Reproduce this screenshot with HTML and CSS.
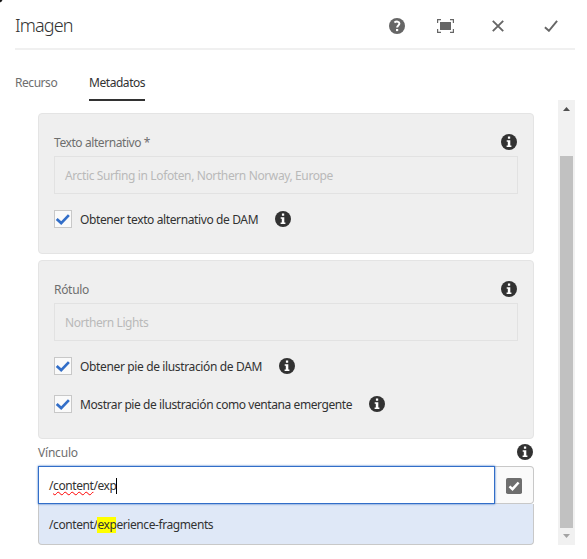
FILE: index.html
```html
<!DOCTYPE html>
<html lang="es">
<head>
<meta charset="utf-8">
<title>Imagen</title>
<link rel="stylesheet" href="styles.css">
</head>
<body>
<svg class="defs" aria-hidden="true">
  <symbol id="info" viewBox="0 0 16 16">
    <circle cx="8" cy="8" r="8" fill="#323232"/>
    <path d="M6.9 2.5h2.3v2.3H6.9zM5.7 6.2h3.6v5.2h1.1V13H5.6v-1.6h1.2V7.8H5.7z" fill="#fff"/>
  </symbol>
  <symbol id="tick" viewBox="0 0 16 16">
    <path d="M1.7 7.9 6.2 12.1 13.9 4.1" fill="none" stroke="#326ec8" stroke-width="2.7"/>
  </symbol>
</svg>
<div class="dialog">
  <header class="header">
    <h1 class="title">Imagen</h1>
    <div class="actions">
      <svg class="help" viewBox="0 0 16 16"><circle cx="8" cy="8" r="8" fill="#666"/><path d="M5.4 4.500C7.500 3 10.400 3.500 10.400 5.600 10.400 7.500 8.100 7.500 8.100 9.600" fill="none" stroke="#fff" stroke-width="2"/><path d="M7 11h2.200v2.100H7z" fill="#fff"/></svg>
      <svg class="full" viewBox="0 0 17 14"><path d="M3 3h11v8H3z" fill="#666"/><path d="M.6 4V.6H4M13 .6h3.400V4M16.400 10v3.400H13M4 13.400H.6V10" fill="none" stroke="#666" stroke-width="1.200"/></svg>
      <svg class="close" viewBox="0 0 12 12"><path d="M.8.8 11.200 11.200M11.200.8.8 11.200" stroke="#666" stroke-width="1.900"/></svg>
      <svg class="done" viewBox="0 0 14 12"><path d="M.9 7.200 4.900 10.800 13.100.8" fill="none" stroke="#666" stroke-width="1.900"/></svg>
    </div>
  </header>
  <nav class="tabs">
    <a class="tab"><span class="t-recurso">Recurso</span></a>
    <a class="tab active"><span class="t-meta">Metadatos</span></a>
  </nav>
  <div class="body">
    <main class="content">
      <section class="panel panel-alt">
        <div class="label-row"><span class="t-alt">Texto alternativo *</span><svg class="info"><use href="#info"/></svg></div>
        <div class="field"><span class="t-arctic">Arctic Surfing in Lofoten, Northern Norway, Europe</span></div>
        <div class="check"><span class="box"><svg><use href="#tick"/></svg></span><span class="caption t-obt">Obtener texto alternativo de DAM</span><svg class="info"><use href="#info"/></svg></div>
      </section>
      <section class="panel panel-caption">
        <div class="label-row"><span class="t-rot">Rótulo</span><svg class="info"><use href="#info"/></svg></div>
        <div class="field"><span class="t-north">Northern Lights</span></div>
        <div class="check"><span class="box"><svg><use href="#tick"/></svg></span><span class="caption t-pie">Obtener pie de ilustración de DAM</span><svg class="info"><use href="#info"/></svg></div>
        <div class="check"><span class="box"><svg><use href="#tick"/></svg></span><span class="caption t-most">Mostrar pie de ilustración como ventana emergente</span><svg class="info"><use href="#info"/></svg></div>
      </section>
      <div class="label-row link-label"><span class="t-vin">Vínculo</span><svg class="info"><use href="#info"/></svg></div>
      <div class="picker">
        <div class="entry"><span class="t-path">/<span class="misspelt">content</span>/exp</span><i class="caret"></i></div>
        <div class="browse"><svg viewBox="0 0 16 16"><rect width="16" height="16" rx="1.800" fill="#6e6e6e"/><path d="M3.500 8.400 6.500 11.200 12.600 4.500" fill="none" stroke="#fff" stroke-width="2.500"/></svg></div>
      </div>
      <div class="option"><span class="t-frag">/content/<mark>exp</mark>erience-fragments</span></div>
    </main>
    <div class="scrollbar">
      <svg class="arrow" viewBox="0 0 7 4"><path d="M0 4 3.500 0 7 4z" fill="#505050"/></svg>
      <div class="thumb"></div>
      <svg class="arrow" viewBox="0 0 7 4"><path d="M0 0 3.500 4 7 0z" fill="#a3a3a3"/></svg>
    </div>
  </div>
</div>
</body>
</html>
```

FILE: styles.css
```css
* { box-sizing: border-box; }
body { margin: 0; background: #fff; color: #323232; font: 12px/18px "Noto Sans", "Open Sans", sans-serif; letter-spacing: -.42px; overflow: hidden; }
svg { display: block; flex: none; }
span { white-space: nowrap; }
.defs { position: absolute; width: 0; height: 0; }
.dialog { width: 587px; height: 559px; padding: 0 12px 0 15px; background: radial-gradient(circle at 0 0, #111 0 1.5px, transparent 2.8px); }
.header { display: flex; justify-content: space-between; height: 50px; border-bottom: 2px solid #f0f0f0; }
.title { margin: 13px 0 0; font-size: 18px; line-height: 25px; font-weight: 300; letter-spacing: -.85px; }
.actions { display: flex; align-items: center; height: 52px; padding-right: 17px; }
.help { width: 16px; height: 16px; margin-right: 32px; }
.full { width: 17px; height: 14px; margin-right: 38px; }
.close { width: 12px; height: 12px; margin-right: 40px; }
.done { width: 14px; height: 12px; }
.tabs { display: flex; gap: 32px; height: 51px; padding-top: 24px; }
.tab { height: 27px; color: #6e6e6e; }
.tab span { display: block; width: 42px; }
.tab.active { color: #323232; border-bottom: 2px solid #323232; }
.tab.active span { width: 56px; }
.body { display: flex; justify-content: space-between; margin-top: -1px; }
.content { width: 496px; margin: 13px 0 0 23px; }
.panel { padding: 15px; border: 1px solid #e4e4e4; border-radius: 4px; background: #efefef; }
.panel-alt { height: 141px; margin-bottom: 6px; }
.panel-caption { height: 179px; }
.label-row { display: flex; align-items: center; justify-content: space-between; height: 27px; padding-right: 1px; color: #6e6e6e; }
.label-row .info { margin-top: -1px; }
.info { width: 16px; height: 16px; }
.field { display: flex; align-items: center; height: 38px; padding: 2px 10px 0; border: 1px solid #e2e2e2; color: #b9b9b9; margin-bottom: 16px; }
.check { display: flex; align-items: center; height: 18px; margin-bottom: 20px; }
.box { width: 18px; height: 18px; border: 1px solid #c8c8c8; background: #fafafa; margin-right: 8px; }
.box svg { width: 16px; height: 16px; }
.caption { padding-top: 2px; }
.check .info { margin-left: 17px; }
.t-arctic, .t-obt { letter-spacing: -.38px; }
.t-pie { letter-spacing: -.36px; }
.t-rot { letter-spacing: -.3px; }
.t-vin { letter-spacing: -.2px; }
.t-recurso, .t-meta { letter-spacing: -.45px; }
.picker { display: flex; height: 38px; }
.link-label .info { margin-top: -2px; }
.entry { display: flex; align-items: center; width: 457px; padding: 2px 0 0 10px; border: 1px solid #326ec8; background: #fff; box-shadow: 0 0 2px #326ec8; z-index: 1; }
.misspelt { text-decoration: underline wavy #f00 1px; text-underline-offset: 1px; text-decoration-skip-ink: none; }
.caret { width: 1px; height: 16px; background: #000; }
.browse { display: flex; align-items: center; justify-content: center; width: 39px; padding-top: 2px; border: 1px solid #c8c8c8; border-left: 0; border-radius: 0 4px 4px 0; background: #fafafa; }
.browse svg { width: 16px; height: 16px; }
.option { display: flex; align-items: center; height: 41px; padding: 1px 10px 0; border: 1px solid #c8c8c8; border-top: 0; border-radius: 0 0 4px 4px; background: #dfe8f7; }
mark { display: inline-block; height: 16px; line-height: 16px; background: #ff0; color: inherit; }
.scrollbar { display: flex; flex-direction: column; align-items: center; justify-content: space-between; width: 17px; height: 445px; padding: 7px 0; background: #f1f1f1; }
.arrow { width: 7px; height: 4px; }
.thumb { width: 13px; height: 372px; margin-top: 39px; background: #c1c1c1; }
```
